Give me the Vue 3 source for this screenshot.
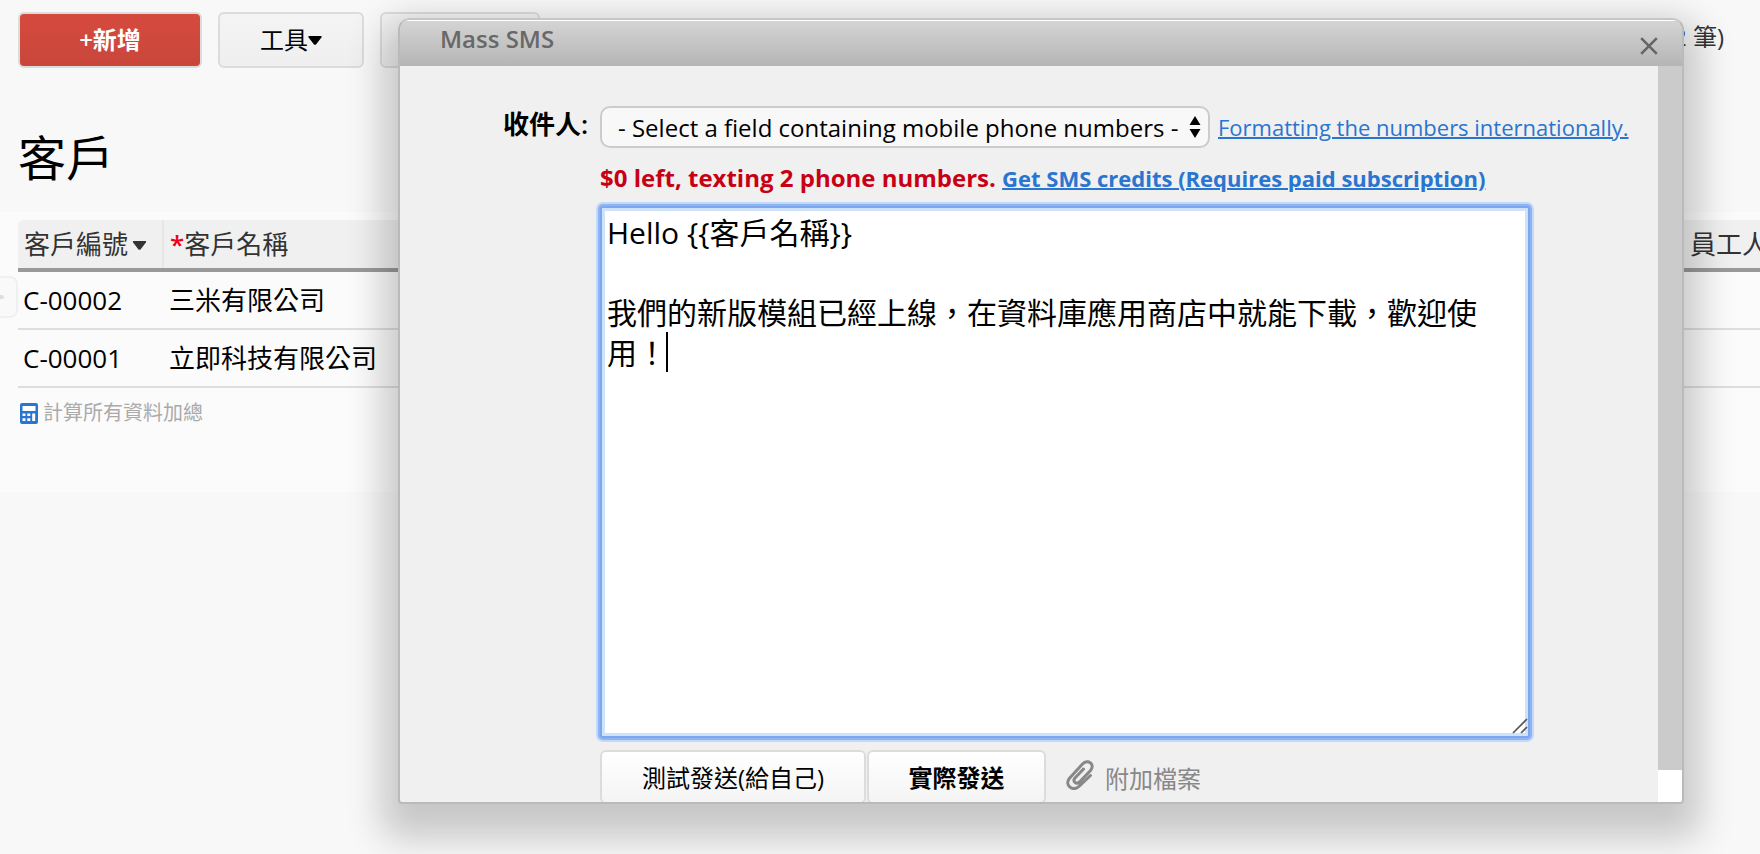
<script setup>
import { ref } from 'vue'

const customers = [
  { id: 'C-00002', name: '三米有限公司' },
  { id: 'C-00001', name: '立即科技有限公司' },
]
const field = ref('')
const message = ref(
  'Hello {{客戶名稱}}\n\n我們的新版模組已經上線，在資料庫應用商店中就能下載，歡迎使用！'
)
</script>

<template>
  <div class="page">
    <header class="toolbar">
      <button type="button" class="btn primary">+新增</button>
      <button type="button" class="btn tools">
        工具<svg class="caret" viewBox="0 0 14 9" aria-hidden="true"><path d="M1 0h12q1 0.5 0.4 1.4L8 8.4q-1 0.9-2 0L0.6 1.4Q0 0.5 1 0z" /></svg>
      </button>
      <button type="button" class="btn more" aria-label="更多"></button>
      <span class="count">(2 筆)</span>
    </header>

    <h1>客戶</h1>

    <section class="panel">
      <button type="button" class="row-tab" aria-label="列選單"><span></span></button>
      <table>
        <colgroup>
          <col class="col-id" />
          <col />
          <col class="col-staff" />
        </colgroup>
        <thead>
          <tr>
            <th scope="col">客戶編號<svg class="sort" viewBox="0 0 14 9" aria-hidden="true"><path d="M1 0h12q1 0.5 0.4 1.4L8 8.4q-1 0.9-2 0L0.6 1.4Q0 0.5 1 0z" /></svg></th>
            <th scope="col"><span class="required">*</span>客戶名稱</th>
            <th scope="col">員工人數</th>
          </tr>
        </thead>
        <tbody>
          <tr v-for="c in customers" :key="c.id">
            <td>{{ c.id }}</td>
            <td>{{ c.name }}</td>
            <td></td>
          </tr>
        </tbody>
      </table>
      <button type="button" class="totals">
        <svg class="calc" viewBox="0 0 18 21" aria-hidden="true">
          <rect width="18" height="21" rx="2" fill="#2a75cf" />
          <path fill="#fff" d="M2.5 3h13v5h-13zM2.5 10.5h3v2.6h-3zM7.3 10.5h3v2.6h-3zM12.2 10.5h3v2.6h-3zM2.5 15.3h3v2.7h-3zM7.3 15.3h3v2.7h-3zM12.2 13h3v5h-3z" />
        </svg>
        計算所有資料加總
      </button>
    </section>

    <div class="dialog" role="dialog" aria-labelledby="dialog-title">
      <div class="titlebar">
        <h2 id="dialog-title">Mass SMS</h2>
        <button type="button" class="close" aria-label="Close">
          <svg viewBox="0 0 18 18" aria-hidden="true"><path d="M1.2 1.2l15.6 15.6M16.8 1.2L1.2 16.8" /></svg>
        </button>
      </div>

      <div class="body">
        <form class="form" @submit.prevent>
          <label class="to" for="field">收件人:</label>
          <div class="fields">
            <div class="line">
              <span class="select">
                <select id="field" v-model="field">
                  <option value="">- Select a field containing mobile phone numbers -</option>
                </select>
                <svg viewBox="0 0 12 22" aria-hidden="true"><path d="M6 0l5.5 9h-11zM6 22l5.5-9h-11z" /></svg>
              </span>
              <a href="#">Formatting the numbers internationally.</a>
            </div>
            <p class="status">
              $0 left, texting 2 phone numbers.
              <a href="#">Get SMS credits (Requires paid subscription)</a>
            </p>
            <div class="editor">
              <textarea v-model="message" aria-label="Message"></textarea>
              <span class="cursor"></span>
              <svg class="grip" viewBox="0 0 16 16" aria-hidden="true"><path d="M1 15L15 1M9 15l6-6" /></svg>
            </div>
            <div class="actions">
              <button type="button" class="btn send test">測試發送(給自己)</button>
              <button type="submit" class="btn send real">實際發送</button>
              <button type="button" class="attach">
                <svg viewBox="0 0 28 30" aria-hidden="true">
                  <path d="M24.500 15.500L13 26.300C6 32-1.500 25 3.300 18.500L16.500 4C22-1.500 29.500 4.500 24.500 10.500L13.500 22C10 25 6.200 21.500 9 18L17.500 9" />
                </svg>
                附加檔案
              </button>
            </div>
          </div>
        </form>
        <div class="scroll"><div class="scroll-end"></div></div>
      </div>
    </div>
  </div>
</template>

<style>
body {
  background: #f8f8f8;
}
</style>

<style scoped>
.page {
  position: relative;
  min-height: 100vh;
  overflow: hidden;
  font-family: "Open Sans", "Noto Sans CJK TC", sans-serif;
  font-size: 24px;
  color: #000;
}
.page *,
.page {
  box-sizing: border-box;
}
button,
select,
textarea {
  font: inherit;
  color: inherit;
  margin: 0;
  padding: 0;
}
a {
  color: #2a75cf;
  font-size: 22px;
  text-decoration-thickness: 2px;
}
.toolbar {
  display: flex;
  gap: 16px;
  padding: 12px 36px 0 18px;
}
.btn {
  height: 56px;
  padding-bottom: 3px;
  border: 2px solid #dcdcdc;
  border-radius: 6px;
  background: linear-gradient(#f4f4f4, #efefef);
}
.primary {
  width: 184px;
  background: linear-gradient(#d64a3e, #c9463b);
  color: #fff;
  font-weight: 600;
}
.tools {
  width: 146px;
}
.more {
  width: 160px;
}
.caret {
  width: 14px;
  height: 9px;
  margin-bottom: 4px;
}
.count {
  margin-left: auto;
  line-height: 50px;
  color: #333;
}
h1 {
  margin: 52px 0 0 18px;
  height: 92px;
  font-size: 48px;
  line-height: 76px;
  font-weight: 400;
}
.panel {
  position: relative;
  height: 280px;
  padding: 8px 0 0 18px;
  background: #fbfbfb;
}
table {
  width: 100%;
  table-layout: fixed;
  border-collapse: separate;
  border-spacing: 0;
  font-size: 26px;
}
.col-id {
  width: 146px;
}
.col-staff {
  width: 76px;
}
th {
  height: 52px;
  padding: 0 0 0 6px;
  background: #f0f0f0;
  border-bottom: 4px solid #999;
  color: #333;
  font-weight: 400;
  line-height: 48px;
  text-align: left;
  white-space: nowrap;
  overflow: hidden;
}
th:first-child {
  box-shadow: inset -2px 0 #e6e6e6;
  border-top-left-radius: 6px;
}
td {
  height: 58px;
  padding: 0 0 0 5px;
  border-bottom: 2px solid #dedede;
  line-height: 56px;
}
.sort {
  width: 15px;
  height: 9px;
  margin: 0 0 4px 4px;
  fill: #333;
}
.required {
  color: #f00020;
  font-weight: 600;
}
.row-tab {
  position: absolute;
  left: -24px;
  top: 64px;
  width: 42px;
  height: 42px;
  border: 2px solid #f0f0f0;
  border-radius: 8px;
  background: #f9f9f9;
}
.row-tab span {
  display: block;
  width: 8px;
  height: 4px;
  margin-left: 18px;
  border-radius: 2px;
  background: #ddd;
}
.totals {
  display: flex;
  align-items: center;
  gap: 5px;
  margin: 11px 0 0 2px;
  border: 0;
  background: none;
  color: #aaa;
  font-size: 20px;
  line-height: 28px;
}
.calc {
  width: 18px;
  height: 21px;
}
.dialog {
  position: absolute;
  inset: 18px 76px 50px 398px;
  display: flex;
  flex-direction: column;
  overflow: hidden;
  border: 2px solid #bababa;
  border-top-color: #c6c6c6;
  border-radius: 12px 12px 4px 4px;
  background: #f0f0f0;
  box-shadow: 0 18px 36px 16px rgba(0, 0, 0, 0.2);
}
.titlebar {
  display: flex;
  flex: none;
  align-items: center;
  justify-content: space-between;
  height: 46px;
  padding: 0 24px 0 40px;
  border-top: 1px solid #fff;
  background: linear-gradient(#d4d4d4, #b5b5b5);
  color: #686868;
}
h2 {
  margin: 0 0 10px;
  font-size: 24px;
  line-height: 34px;
  font-weight: 600;
}
.close {
  width: 18px;
  height: 18px;
  margin-top: 4px;
  border: 0;
  background: none;
}
.close svg {
  display: block;
  width: 18px;
  height: 18px;
  fill: none;
  stroke: #666;
  stroke-width: 2.6;
}
.body {
  display: flex;
  flex: 1;
  min-height: 0;
}
.form {
  display: grid;
  flex: 1;
  min-width: 0;
  grid-template-columns: 188px minmax(0, 1fr);
  align-items: start;
  gap: 12px;
  padding-top: 40px;
  overflow: hidden;
}
.to {
  font-size: 26px;
  font-weight: 600;
  line-height: 36px;
  text-align: right;
}
.line {
  display: flex;
  align-items: center;
  gap: 8px;
  height: 42px;
  white-space: nowrap;
}
.select {
  position: relative;
  display: flex;
}
.select select {
  width: 610px;
  height: 42px;
  padding: 0 16px;
  appearance: none;
  border: 2px solid #ccc;
  border-radius: 10px;
  background: #f8f8f8;
}
.select svg {
  position: absolute;
  right: 9px;
  top: 10px;
  width: 12px;
  height: 22px;
  pointer-events: none;
}
.status {
  margin: 12px 0 10px;
  color: #c80014;
  font-weight: 700;
  line-height: 36px;
  white-space: nowrap;
}
.editor {
  position: relative;
  width: calc(100% - 128px);
}
.editor textarea {
  display: block;
  width: 100%;
  height: 532px;
  padding: 5px 36px 5px 5px;
  resize: none;
  outline: 0;
  border: 2px solid #7ea8ea;
  border-radius: 3px;
  background: #fff;
  box-shadow: inset 0 0 0 3px #cfe2fb, 0 0 0 2px #8cb4f8, 0 0 0 4px #c5d8f5;
  font-size: 30px;
  line-height: 40px;
}
.cursor {
  position: absolute;
  left: 66px;
  top: 126px;
  width: 2px;
  height: 40px;
  background: #000;
}
.grip {
  position: absolute;
  right: 2px;
  bottom: 4px;
  width: 16px;
  height: 16px;
  stroke: #555;
  stroke-width: 1.6;
}
.actions {
  display: flex;
  align-items: center;
  gap: 1px;
  margin-top: 12px;
}
.send {
  height: 54px;
  padding-bottom: 1px;
  background: linear-gradient(#fff, #f4f4f4);
}
.test {
  width: 266px;
}
.real {
  width: 179px;
  font-weight: 600;
}
.attach {
  display: flex;
  align-items: center;
  gap: 11px;
  margin-left: 19px;
  border: 0;
  background: none;
  color: #888;
}
.attach svg {
  width: 28px;
  height: 30px;
  margin-bottom: 4px;
  fill: none;
  stroke: #888;
  stroke-width: 3;
  stroke-linecap: round;
}
.scroll {
  display: flex;
  flex: none;
  flex-direction: column;
  justify-content: flex-end;
  width: 24px;
  background: #cbcbcb;
}
.scroll-end {
  height: 32px;
  background: #fff;
}
</style>
